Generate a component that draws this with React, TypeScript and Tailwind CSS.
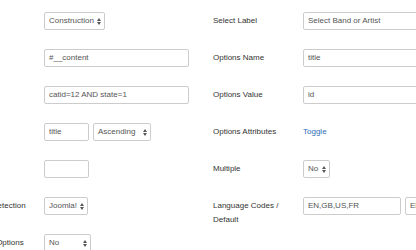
import React from "react";

const Arrow = () => (
  <svg width="4" height="7" viewBox="0 0 4 7" className="shrink-0">
    <path d="M0 3 L2 0 L4 3 Z" fill="#555" />
    <path d="M0 4 L4 4 L2 7 Z" fill="#555" />
  </svg>
);

const Input = ({ value, w }: { value?: string; w: string }) => (
  <div
    className={`${w} h-[18px] shrink-0 border border-[#cccccc] rounded-[2px] bg-white px-[4px] flex items-center text-[#555555] whitespace-nowrap overflow-hidden`}
  >
    {value}
  </div>
);

const Select = ({ value, w }: { value: string; w: string }) => (
  <div
    className={`${w} h-[18px] shrink-0 border border-[#cccccc] rounded-[2px] bg-white pl-[4px] pr-[3px] flex items-center justify-between text-[#555555] whitespace-nowrap`}
  >
    <span>{value}</span>
    <Arrow />
  </div>
);

const Row = ({
  label,
  children,
}: {
  label?: React.ReactNode;
  children?: React.ReactNode;
}) => (
  <div className="flex h-[18px] mb-[19px]">
    <div className="w-[80px] mr-[10px] shrink-0 pt-[2px] leading-[14px] text-[#333333]">{label}</div>
    <div className="flex items-center gap-[4px]">{children}</div>
  </div>
);

export default function App() {
  return (
    <div
      className="w-[416px] h-[250px] overflow-hidden bg-white text-[8px] flex"
      style={{ fontFamily: '"Liberation Sans", Arial, sans-serif' }}
    >
      <div className="ml-[-46px] w-[259px] shrink-0 pt-[12px]">
        <Row>
          <Select value="Construction" w="w-[61px]" />
        </Row>
        <Row>
          <Input value="#__content" w="w-[145px]" />
        </Row>
        <Row>
          <Input value="catid=12 AND state=1" w="w-[145px]" />
        </Row>
        <Row>
          <Input value="title" w="w-[45px]" />
          <Select value="Ascending" w="w-[58px]" />
        </Row>
        <Row>
          <Input w="w-[45px]" />
        </Row>
        <Row label="Language Detection">
          <Select value="Joomla!" w="w-[44px]" />
        </Row>
        <Row label={<span className="block whitespace-nowrap ml-[-5px]">Show Empty Options</span>}>
          <Select value="No" w="w-[47px]" />
        </Row>
      </div>
      <div className="shrink-0 pt-[12px]">
        <Row label="Select Label">
          <Input value="Select Band or Artist" w="w-[145px]" />
        </Row>
        <Row label="Options Name">
          <Input value="title" w="w-[145px]" />
        </Row>
        <Row label="Options Value">
          <Input value="id" w="w-[145px]" />
        </Row>
        <Row label="Options Attributes">
          <span className="text-[#2a6cb5] leading-[14px]">Toggle</span>
        </Row>
        <Row label="Multiple">
          <Select value="No" w="w-[27px]" />
        </Row>
        <Row label="Language Codes / Default">
          <Input value="EN,GB,US,FR" w="w-[98px]" />
          <Input value="EN" w="w-[98px]" />
        </Row>
      </div>
    </div>
  );
}
